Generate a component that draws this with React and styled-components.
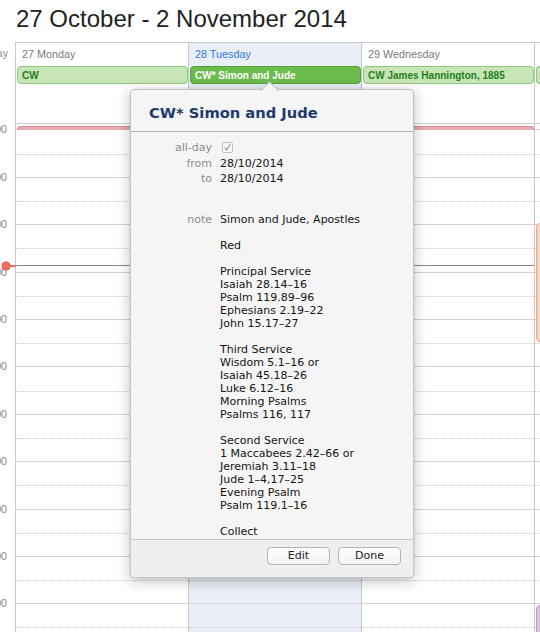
import React from 'react';
import styled, { createGlobalStyle } from 'styled-components';

const HOUR = 47.4;
const SCROLL = 42;

const GlobalStyle = createGlobalStyle`
  html, body {
    margin: 0;
    padding: 0;
    background: #fff;
  }
  body {
    font-family: "Liberation Sans", Arial, sans-serif;
    overflow: hidden;
  }
`;

const Page = styled.div`
  position: relative;
  width: 540px;
  height: 632px;
  overflow: hidden;
  background: #fff;
`;

const Title = styled.h1`
  margin: 0;
  height: 42px;
  box-sizing: border-box;
  padding: 5px 0 0 16px;
  font-size: 24px;
  line-height: 28px;
  font-weight: normal;
  color: #222;
  white-space: nowrap;
`;

const Week = styled.div`
  position: relative;
  display: grid;
  grid-template-columns: 15px 173px 173px 173px 1fr;
  height: 590px;
  overflow: hidden;
`;

const Gutter = styled.div`
  display: flex;
  flex-direction: column;
  min-width: 0;
`;

const GutterHead = styled.div`
  height: 23px;
  flex-shrink: 0;
  display: flex;
  justify-content: flex-end;
  align-items: center;
  padding-right: 7px;
  padding-bottom: 1px;
  box-sizing: border-box;
  font-size: 10.6px;
  color: #8a8a8a;
  white-space: nowrap;
`;

const GutterAllDay = styled.div`
  height: 58px;
  flex-shrink: 0;
`;

/* same top edge as the day columns' time grid */
const GutterTime = styled.div`
  flex: 1;
  border-top: 1px solid transparent;
  overflow: hidden;
`;

// labels are centred on the hour lines: the first visible one sits on the
// second grid line, so start half an hour above it
const GutterHours = styled.div`
  display: flex;
  flex-direction: column;
  margin-top: ${HOUR / 2 - SCROLL}px;
`;

const HourLabel = styled.div`
  height: ${HOUR}px;
  flex-shrink: 0;
  display: flex;
  justify-content: flex-end;
  align-items: center;
  padding-right: 8px;
  font-size: 10.6px;
  color: #8d8580;
  white-space: nowrap;
`;

const DayColumn = styled.div`
  display: flex;
  flex-direction: column;
  min-width: 0;
  border-left: 1px solid #c9c9c9;
  border-top: 1px solid #c9c9c9;
  background: ${p => (p.$selected ? '#e9eef7' : '#fff')};
`;

const DayHead = styled.div`
  height: 22px;
  flex-shrink: 0;
  display: flex;
  align-items: center;
  padding: 0 0 1px 6px;
  box-sizing: border-box;
  font-size: 10.8px;
  color: ${p => (p.$selected ? '#2d7ce0' : '#7b7b7b')};
  white-space: nowrap;
  overflow: hidden;
`;

const AllDay = styled.div`
  height: 58px;
  flex-shrink: 0;
  display: flex;
  flex-direction: column;
`;

const AllDayEvent = styled.div`
  height: 18px;
  margin: 1px 0 0 1px;
  box-sizing: border-box;
  padding-left: 4px;
  display: flex;
  align-items: center;
  border-radius: 4px;
  border: 1px solid ${p => (p.$active ? '#52a237' : '#8ccb77')};
  background: ${p => (p.$active ? '#6bbb4d' : '#c7e5b6')};
  color: ${p => (p.$active ? '#fff' : '#1f7f1f')};
  font-size: 10px;
  font-weight: bold;
  white-space: nowrap;
  overflow: hidden;
`;

const TimeGrid = styled.div`
  position: relative;
  flex: 1;
  border-top: 1px solid #c9c9c9;
  overflow: hidden;
`;

const Hours = styled.div`
  display: flex;
  flex-direction: column;
  margin-top: -${SCROLL}px;
`;

const HourSlot = styled.div`
  position: relative;
  height: ${HOUR}px;
  flex-shrink: 0;
  box-sizing: border-box;
  border-top: 1px solid #d2d2d2;

  &::after {
    content: '';
    position: absolute;
    left: 0;
    right: 0;
    top: 50%;
    border-top: 1px dotted #cdcdcd;
  }
`;

const TimedEvent = styled.div`
  position: absolute;
  left: 1px;
  right: -6px;
  border-radius: 4px;
  border: 1px solid ${p => p.$edge};
  background: ${p => p.$fill};
`;

const EventStrip = styled.div`
  position: absolute;
  left: 17px;
  width: 517px;
  top: 84px;
  height: 4px;
  box-sizing: border-box;
  border: 1px solid #d98b96;
  border-bottom: none;
  border-radius: 4px 3px 0 0;
  background: #eaa8b0;
`;

const NowLine = styled.div`
  position: absolute;
  left: 16px;
  width: 518px;
  top: 223px;
  height: 1px;
  background: #8a8a8a;
`;

const NowDot = styled.div`
  position: absolute;
  left: 2px;
  top: 220px;
  width: 8px;
  height: 8px;
  border-radius: 50%;
  background: #f06a5f;
  box-shadow: 0 0 0 0.5px #d9483d;

  &::after {
    content: '';
    position: absolute;
    left: 7px;
    top: 3px;
    width: 7px;
    height: 1.5px;
    background: #f06a5f;
  }
`;

const Popover = styled.div`
  position: absolute;
  left: 130px;
  top: 89px;
  width: 284px;
  height: 489px;
  box-sizing: border-box;
  display: flex;
  flex-direction: column;
  background: #f5f5f5;
  border: 1px solid rgba(0, 0, 0, 0.2);
  border-radius: 5px;
  box-shadow: 0 3px 14px rgba(0, 0, 0, 0.26), 0 0 2px rgba(0, 0, 0, 0.08);
  font-family: "DejaVu Sans", "Lucida Grande", Verdana, sans-serif;
`;

const Arrow = styled.div`
  position: absolute;
  left: 132px;
  top: -6px;
  width: 12px;
  height: 12px;
  background: #f5f5f5;
  border-left: 1px solid rgba(0, 0, 0, 0.2);
  border-top: 1px solid rgba(0, 0, 0, 0.2);
  transform: rotate(45deg);
`;

const PopHeader = styled.div`
  position: relative;
  flex-shrink: 0;
  padding: 14px 18px 9px;
  border-bottom: 1px solid #bdb2b3;
`;

const PopTitle = styled.div`
  font-size: 14.7px;
  line-height: 18px;
  font-weight: bold;
  color: #1d3a6f;
  white-space: nowrap;
`;

const PopBody = styled.div`
  flex: 1;
  overflow: hidden;
  padding-top: 8px;
  font-size: 11px;
`;

const Fields = styled.div`
  display: grid;
  grid-template-columns: 81px 1fr;
  column-gap: 8px;
  line-height: ${p => p.$line}px;
  margin-top: ${p => p.$gap || 0}px;
`;

const FieldLabel = styled.div`
  text-align: right;
  color: #8c8c8c;
  white-space: nowrap;
`;

const FieldValue = styled.div`
  color: #141414;
  white-space: pre-line;
  display: flex;
  flex-direction: column;
`;

const CheckBox = styled.svg`
  display: block;
  margin: 2px 0 0 2px;
`;

const PopFooter = styled.div`
  flex-shrink: 0;
  height: 38px;
  box-sizing: border-box;
  border-top: 1px solid #c8c8c8;
  background: #efefef;
  border-radius: 0 0 5px 5px;
  display: flex;
  justify-content: flex-end;
  align-items: flex-start;
  gap: 8px;
  padding: 7px 12px 0 0;
`;

const Button = styled.button`
  width: 63px;
  height: 18px;
  padding: 0;
  border: 1px solid #b5b5b5;
  border-radius: 4px;
  background: linear-gradient(#ffffff, #f3f3f3);
  font-family: "DejaVu Sans", "Lucida Grande", Verdana, sans-serif;
  font-size: 11px;
  line-height: 16px;
  color: #222;
`;

const days = [
  { label: '27 Monday', event: 'CW' },
  { label: '28 Tuesday', event: 'CW* Simon and Jude', selected: true },
  { label: '29 Wednesday', event: 'CW James Hannington, 1885' },
  { label: '30 Thursday', event: 'CW', edge: true },
];

// grid rows start at 07:00, the 07:00 row is mostly scrolled away
const hours = Array.from({ length: 13 }, (_, i) => `${String(7 + i).padStart(2, '0')}:00`);

const note = `Simon and Jude, Apostles

Red

Principal Service
Isaiah 28.14–16
Psalm 119.89–96
Ephesians 2.19–22
John 15.17–27

Third Service
Wisdom 5.1–16 or
Isaiah 45.18–26
Luke 6.12–16
Morning Psalms
Psalms 116, 117

Second Service
1 Maccabees 2.42–66 or
Jeremiah 3.11–18
Jude 1–4,17–25
Evening Psalm
Psalm 119.1–16

Collect`;

function Day({ day }) {
  return (
    <DayColumn $selected={day.selected}>
      <DayHead $selected={day.selected}>{day.label}</DayHead>
      <AllDay>
        <AllDayEvent $active={day.selected}>{day.event}</AllDayEvent>
      </AllDay>
      <TimeGrid>
        <Hours>
          {hours.map(h => <HourSlot key={h} />)}
        </Hours>
        {day.edge && (
          <>
            <TimedEvent $fill="#fbd3bf" $edge="#eea98a" style={{ top: 99, height: 117 }} />
            <TimedEvent $fill="#dcc1e1" $edge="#c596cd" style={{ top: 481, height: 60 }} />
          </>
        )}
      </TimeGrid>
    </DayColumn>
  );
}

function EventPopover() {
  return (
    <Popover>
      <PopHeader>
        <Arrow />
        <PopTitle>CW* Simon and Jude</PopTitle>
      </PopHeader>
      <PopBody>
        <Fields $line={15.5}>
          <FieldLabel>all-day</FieldLabel>
          <FieldValue>
            <CheckBox width="11" height="11" viewBox="0 0 11 11">
              <rect x="0.5" y="0.5" width="10" height="10" rx="1.5" fill="#f8f8f8" stroke="#c4c4c4" />
              <path d="M2.6 5.6 L4.6 8 L8.6 1.8" fill="none" stroke="#9d9d9d" strokeWidth="1.2" />
            </CheckBox>
          </FieldValue>
          <FieldLabel>from</FieldLabel>
          <FieldValue>28/10/2014</FieldValue>
          <FieldLabel>to</FieldLabel>
          <FieldValue>28/10/2014</FieldValue>
        </Fields>
        <Fields $line={13} $gap={26}>
          <FieldLabel>note</FieldLabel>
          <FieldValue>{note}</FieldValue>
        </Fields>
      </PopBody>
      <PopFooter>
        <Button>Edit</Button>
        <Button>Done</Button>
      </PopFooter>
    </Popover>
  );
}

export default function App() {
  return (
    <Page>
      <GlobalStyle />
      <Title>27 October - 2 November 2014</Title>
      <Week>
        <Gutter>
          <GutterHead>all-day</GutterHead>
          <GutterAllDay />
          <GutterTime>
            <GutterHours>
              {hours.slice(1).map(h => <HourLabel key={h}>{h}</HourLabel>)}
            </GutterHours>
          </GutterTime>
        </Gutter>
        {days.map(d => <Day key={d.label} day={d} />)}
        <EventStrip />
        <NowLine />
        <NowDot />
      </Week>
      <EventPopover />
    </Page>
  );
}
